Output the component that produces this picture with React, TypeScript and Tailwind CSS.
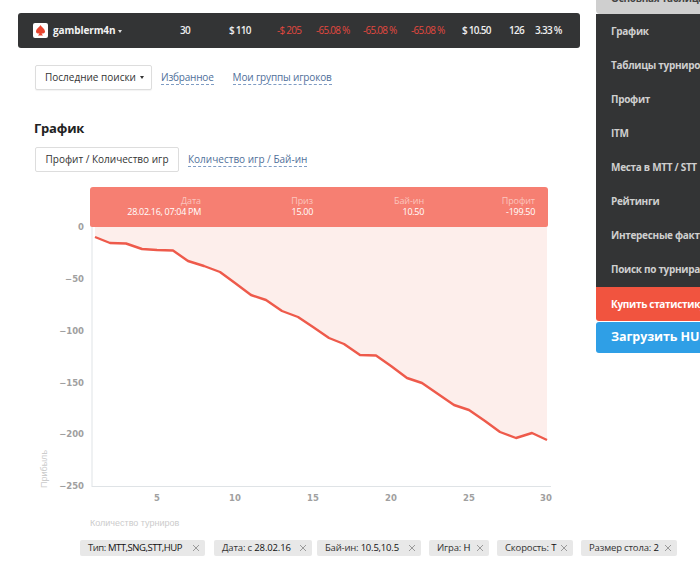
import React from "react";

const pts: [number, number][] = [
  [95, 237], [110, 243], [126, 243.5], [142, 249], [157, 250], [173, 250.5], [188, 261], [204, 266], [220, 272], [235, 283],
  [251, 295], [266, 300], [282, 311], [298, 317], [313, 327], [329, 338], [344, 344], [360, 355], [376, 355.5], [391, 366],
  [407, 378], [422, 383], [438, 394], [454, 405], [469, 410], [485, 421], [500, 432], [516, 438], [532, 433], [547, 440],
];
const line = pts.map((p) => p.join(",")).join(" ");
const area = `${line} 547,227 95,227`;

const stats: { t: string; w: string; red?: boolean }[] = [
  { t: "30", w: "w-[49px]" },
  { t: "$ 110", w: "w-[48px]" },
  { t: "-$ 205", w: "w-[39px]", red: true },
  { t: "-65.08 %", w: "w-[47px]", red: true },
  { t: "-65.08 %", w: "w-[48px]", red: true },
  { t: "-65.08 %", w: "w-[51px]", red: true },
  { t: "$ 10.50", w: "w-[47px]" },
  { t: "126", w: "w-[26px]" },
  { t: "3.33 %", w: "w-[30px]" },
];

const tips = [
  { l: "Дата", v: "28.02.16, 07:04 PM", w: "w-[111px]" },
  { l: "Приз", v: "15.00", w: "w-[112px]" },
  { l: "Бай-ин", v: "10.50", w: "w-[111px]" },
  { l: "Профит", v: "-199.50", w: "w-[111px]" },
];

const tags: [string, string, string][] = [
  ["Тип:", "MTT,SNG,STT,HUP", "w-[125px] mr-[9px] tracking-[-0.45px]"],
  ["Дата: с", "28.02.16", "w-[98px] mr-[5px] tracking-[-0.15px]"],
  ["Бай-ин:", "10.5,10.5", "w-[104px] mr-[8px] tracking-[-0.2px]"],
  ["Игра:", "H", "w-[60px] mr-[8px] tracking-[-0.15px]"],
  ["Скорость:", "T", "w-[76px] mr-[8px] tracking-[-0.15px]"],
  ["Размер стола:", "2", "w-[96px] tracking-[-0.15px]"],
];

const menu = ["График", "Таблицы турниров", "Профит", "ITM", "Места в MTT / STT", "Рейтинги", "Интересные факты", "Поиск по турнирам"];

const F = "font-['Open_Sans','Noto_Sans',sans-serif]";

export default function App() {
  return (
    <div className={`w-[700px] h-[582px] overflow-hidden bg-white flex ${F}`}>
      <main className="w-[596px] shrink-0 flex flex-col pl-[18px]">
        <div className="mt-[13px] w-[562px] h-[35px] rounded-[3px] bg-[#333435] flex items-center pl-[15px] text-[10px] font-semibold tracking-[-0.75px] text-[#eeeeee]">
          <svg width="15" height="15" viewBox="0 0 15 15" className="shrink-0">
            <rect width="15" height="15" rx="2" fill="#ffffff" />
            <path d="M7.500 2 C9 4.500 12 6 12 8.600 C12 10.400 10 11.200 8.600 10 C8.700 11 9.200 11.800 10 12.600 H5 C5.800 11.800 6.300 11 6.400 10 C5 11.200 3 10.400 3 8.600 C3 6 6 4.500 7.500 2Z" fill="#e8452f" />
          </svg>
          <span className="ml-[5px] w-[65px] text-[10px] font-bold tracking-[-0.1px] text-[#f2f2f2] whitespace-nowrap">gamblerm4n</span>
          <span className="w-0 h-0 border-x-[2.5px] border-x-transparent border-t-[3px] border-t-[#dddddd] mt-[1px]" />
          <div className="ml-[58px] flex">
            {stats.map((s, i) => (
              <span key={i} className={`${s.w} whitespace-nowrap ${s.red ? "text-[#e4483f] font-normal" : ""}`}>{s.t}</span>
            ))}
          </div>
        </div>

        <div className="mt-[17px] ml-[17px] flex items-center text-[10px]">
          <button className="w-[117px] h-[25px] rounded-[2px] border border-[#dddddd] bg-white text-[#333333] flex items-center pl-[9px] whitespace-nowrap shadow-[0_1px_1px_rgba(0,0,0,0.05)]">
            Последние поиски
            <span className="ml-[4px] w-0 h-0 border-x-[2.5px] border-x-transparent border-t-[3px] border-t-[#333333]" />
          </button>
          <a className="ml-[9px] text-[#4f6f9a] border-b border-dashed border-[#7f9cc4] leading-[13px] tracking-[-0.2px]">Избранное</a>
          <a className="ml-[19px] text-[#4f6f9a] border-b border-dashed border-[#7f9cc4] leading-[13px] tracking-[-0.15px]">Мои группы игроков</a>
        </div>

        <h2 className="mt-[28px] ml-[16px] text-[13px] leading-[20px] font-bold tracking-[-0.2px] text-[#222222]">График</h2>

        <div className="mt-[9px] ml-[17px] flex items-center text-[10px]">
          <button className="w-[144px] h-[25px] rounded-[2px] border border-[#dddddd] bg-white text-[#333333] flex items-center justify-center whitespace-nowrap">Профит / Количество игр</button>
          <a className="ml-[9px] text-[#4f6f9a] border-b border-dashed border-[#7f9cc4] leading-[13px]">Количество игр / Бай-ин</a>
        </div>

        <div className="relative z-10 mt-[15px] ml-[72px] w-[458px] h-[40px] shrink-0 rounded-t-[3px] rounded-b-[2px] bg-[#f67f72] flex text-[9px] leading-[11px] text-white tracking-[-0.1px]">
          {tips.map((t) => (
            <div key={t.l} className={`${t.w} pt-[8px] text-right`}>
              <div className="text-[#fbc5be]">{t.l}</div>
              <div className="font-medium tracking-[-0.3px]">{t.v}</div>
            </div>
          ))}
        </div>

        <svg width="596" height="309" viewBox="0 220 596 309" className="-ml-[18px] -mt-[7px] shrink-0">
          <polygon points={area} fill="#fdeeeb" />
          <line x1="92" y1="227" x2="92" y2="487" stroke="#dfe3e6" />
          <line x1="92" y1="486.500" x2="551" y2="486.500" stroke="#dfe3e6" />
          <polyline points={line} fill="none" stroke="#ee5a4b" strokeWidth="2.4" strokeLinejoin="round" />
          <g fontFamily="'DejaVu Sans',sans-serif" fontSize="8.500" fontWeight="bold" fill="#a0a0a0" textAnchor="end">
            <text x="84" y="230">0</text>
            <text x="84" y="282">−50</text>
            <text x="84" y="334">−100</text>
            <text x="84" y="386">−150</text>
            <text x="84" y="437">−200</text>
            <text x="84" y="489">−250</text>
          </g>
          <g fontFamily="'DejaVu Sans',sans-serif" fontSize="8.500" fontWeight="bold" fill="#a0a0a0" textAnchor="middle">
            <text x="157" y="501">5</text>
            <text x="235" y="501">10</text>
            <text x="313" y="501">15</text>
            <text x="391" y="501">20</text>
            <text x="469" y="501">25</text>
            <text x="546" y="501">30</text>
          </g>
          <text x="0" y="0" fontSize="9" fontFamily="'Liberation Sans',sans-serif" fill="#cccccc" transform="translate(47,488) rotate(-90)">Прибыль</text>
          <text x="90" y="526" fontSize="9" fontFamily="'Liberation Sans',sans-serif" fill="#cccccc">Количество турниров</text>
        </svg>

        <div className="mt-[11px] ml-[62px] flex text-[9.500px] text-[#333333] whitespace-nowrap">
          {tags.map(([a, b, w]) => (
            <div key={a} className={`${w} h-[16px] rounded-[2px] bg-[#e8e8e8] flex items-center justify-between pl-[8px] pr-[5px] shrink-0`}>
              <span>{a} <b className="font-medium text-[#111111]">{b}</b></span>
              <svg width="8" height="8" viewBox="0 0 8 8" className="shrink-0"><path d="M1 1l6 6M7 1l-6 6" stroke="#9a9a9a" strokeWidth="1" /></svg>
            </div>
          ))}
        </div>
      </main>

      <aside className="w-[104px] shrink-0 overflow-hidden whitespace-nowrap">
        <div className="w-[130px]">
          <div className="h-[14px] rounded-bl-[4px] bg-[#cfcfcf] overflow-hidden pl-[15px] text-[10px] font-bold tracking-[-0.3px] text-[#444444] leading-[10px]">
            <div className="-mt-[7px]">Основная таблица</div>
          </div>
          <div className="bg-[#333435] h-[273px] flex flex-col text-[10px] font-bold tracking-[-0.3px] text-[#cfcfcf]">
            {menu.map((m) => (
              <div key={m} className="h-[34px] flex items-center pl-[15px] shrink-0">{m}</div>
            ))}
          </div>
          <div className="h-[34px] rounded-bl-[3px] bg-[#f1543f] flex items-center pl-[15px] text-[10px] font-bold tracking-[-0.3px] text-white">Купить статистику</div>
          <div className="mt-[1px] h-[31px] rounded-l-[3px] bg-[#2f9fe6] flex items-center pl-[15px] text-[12.500px] font-bold tracking-[-0.1px] text-white">Загрузить HUD</div>
        </div>
      </aside>
    </div>
  );
}
